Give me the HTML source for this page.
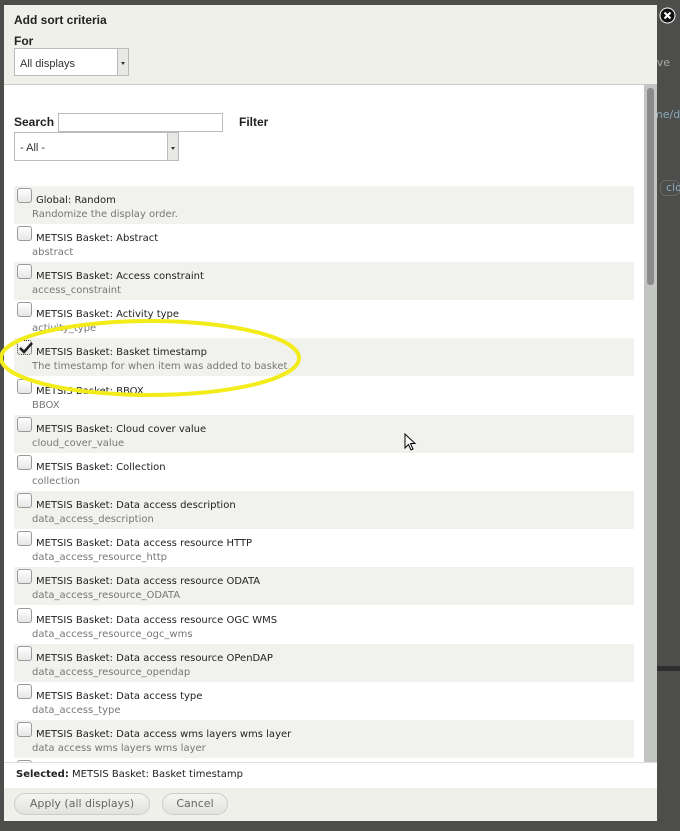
<!DOCTYPE html>
<html><head><style>
*{margin:0;padding:0;box-sizing:border-box}
body{width:680px;height:831px;background:#4d4d4b;position:relative;overflow:hidden;font-family:"DejaVu Sans","Liberation Sans",sans-serif;}
.abs{position:absolute}
.dlg{left:4px;top:5px;width:653px;height:816px;background:#f0f0eb;}
.hdr{font-family:"Liberation Sans",sans-serif;}
.sel{border:1px solid #bbb;background:#fff;font-family:"Liberation Sans",sans-serif;font-size:11px;color:#333;}
.arr{position:absolute;right:0;top:0;bottom:0;width:11px;background:#e8e8e4;border-left:1px solid #bbb}
.arr:after{content:"";position:absolute;left:3px;top:50%;border:2px solid transparent;border-top:3px solid #333;}
.row{position:absolute;left:14px;width:620px;height:38px;}
.row.g{background:#f1f1ed}
.cb{position:absolute;left:3px;top:2px;width:15px;height:15px;border:1px solid #999;border-radius:3px;background:linear-gradient(#fff,#e6e6e6);}
.t{position:absolute;left:22px;top:9px;font-size:10px;color:#222;white-space:nowrap}
.d{position:absolute;left:18px;top:23px;font-size:10px;color:#777;white-space:nowrap}
.btn{position:absolute;top:793px;height:22px;border:1px solid #ccc;border-radius:11px;background:linear-gradient(#f4f4f1,#e2e2de);font-size:11px;color:#666;text-align:center;line-height:20px}
</style></head><body>
<div class="abs" style="left:650px;top:56px;font-size:11px;color:#aaa">ave</div>
<div class="abs" style="left:652px;top:108px;font-size:11px;color:#8ab">me/d</div>
<div class="abs" style="left:660px;top:180px;width:20px;height:16px;border:1px solid #666;border-radius:6px;font-size:11px;color:#8ab;padding-left:5px">clo</div>
<div class="abs" style="left:657px;top:666px;width:23px;height:5px;background:#2e2e2e"></div>
<div class="abs dlg"></div>
<div class="abs hdr" style="left:14px;top:13px;font-size:12px;font-weight:bold;color:#222">Add sort criteria</div>
<div class="abs hdr" style="left:14px;top:34px;font-size:12px;font-weight:bold;color:#222">For</div>
<div class="abs sel" style="left:14px;top:48px;width:115px;height:28px;padding:9px 5px">All displays<div class="arr"></div></div>
<div class="abs" style="left:4px;top:84px;width:640px;height:678px;background:#fff;border-top:1px solid #ccc"></div>
<div class="abs" style="left:644px;top:84px;width:13px;height:678px;background:#c3c5c3"></div>
<div class="abs" style="left:647px;top:88px;width:7px;height:197px;background:#8a8a8a;border-radius:3px"></div>
<div class="abs hdr" style="left:14px;top:115px;font-size:12px;font-weight:bold;color:#222">Search</div>
<div class="abs" style="left:58px;top:113px;width:165px;height:19px;border:1px solid #bbb;background:#fff"></div>
<div class="abs hdr" style="left:239px;top:115px;font-size:12px;font-weight:bold;color:#222">Filter</div>
<div class="abs sel" style="left:14px;top:132px;width:165px;height:29px;padding:9px 5px">- All -<div class="arr"></div></div>

<div class="row g" style="top:186px"><div class="cb"></div><div class="t">Global: Random</div><div class="d">Randomize the display order.</div></div>
<div class="row" style="top:224px"><div class="cb"></div><div class="t">METSIS Basket: Abstract</div><div class="d">abstract</div></div>
<div class="row g" style="top:262px"><div class="cb"></div><div class="t">METSIS Basket: Access constraint</div><div class="d">access_constraint</div></div>
<div class="row" style="top:300px"><div class="cb"></div><div class="t">METSIS Basket: Activity type</div><div class="d">activity_type</div></div>
<div class="row g" style="top:338px"><div class="cb" style="border:1px dotted #333"><svg width="15" height="13" style="position:absolute;left:0;top:0"><path d="M2 7 L6 11 L14 2" stroke="#222" stroke-width="2.6" fill="none"/></svg></div><div class="t">METSIS Basket: Basket timestamp</div><div class="d">The timestamp for when item was added to basket</div></div>
<div class="row" style="top:377px"><div class="cb"></div><div class="t">METSIS Basket: BBOX</div><div class="d">BBOX</div></div>
<div class="row g" style="top:415px"><div class="cb"></div><div class="t">METSIS Basket: Cloud cover value</div><div class="d">cloud_cover_value</div></div>
<div class="row" style="top:453px"><div class="cb"></div><div class="t">METSIS Basket: Collection</div><div class="d">collection</div></div>
<div class="row g" style="top:491px"><div class="cb"></div><div class="t">METSIS Basket: Data access description</div><div class="d">data_access_description</div></div>
<div class="row" style="top:529px"><div class="cb"></div><div class="t">METSIS Basket: Data access resource HTTP</div><div class="d">data_access_resource_http</div></div>
<div class="row g" style="top:567px"><div class="cb"></div><div class="t">METSIS Basket: Data access resource ODATA</div><div class="d">data_access_resource_ODATA</div></div>
<div class="row" style="top:606px"><div class="cb"></div><div class="t">METSIS Basket: Data access resource OGC WMS</div><div class="d">data_access_resource_ogc_wms</div></div>
<div class="row g" style="top:644px"><div class="cb"></div><div class="t">METSIS Basket: Data access resource OPenDAP</div><div class="d">data_access_resource_opendap</div></div>
<div class="row" style="top:682px"><div class="cb"></div><div class="t">METSIS Basket: Data access type</div><div class="d">data_access_type</div></div>
<div class="row g" style="top:720px"><div class="cb"></div><div class="t">METSIS Basket: Data access wms layers wms layer</div><div class="d">data access wms layers wms layer</div></div>
<div class="row" style="top:758px;height:4px;overflow:hidden"><div class="cb"></div></div>

<svg class="abs" style="left:0;top:315px" width="310" height="90"><ellipse cx="150" cy="43" rx="149" ry="37" fill="none" stroke="#f2ec1a" stroke-width="4"/></svg>
<svg class="abs" style="left:404px;top:433px" width="14" height="20"><path d="M1 1 L1 15 L4.5 11.5 L7 17 L9 16 L6.5 10.5 L11 10.5 Z" fill="#fff" stroke="#000" stroke-width="1"/></svg>

<div class="abs" style="left:4px;top:762px;width:653px;height:26px;background:#fff;border-top:1px solid #ddd"></div>
<div class="abs" style="left:16px;top:769px;font-size:10px;color:#222"><b>Selected:</b> METSIS Basket: Basket timestamp</div>
<div class="btn" style="left:14px;width:136px">Apply (all displays)</div>
<div class="btn" style="left:162px;width:66px">Cancel</div>
<svg class="abs" style="left:659px;top:7px" width="17" height="17"><circle cx="8.5" cy="8.5" r="7.5" fill="#111" stroke="#fff" stroke-width="1"/><path d="M5.5 5.5 L11.5 11.5 M11.5 5.5 L5.5 11.5" stroke="#fff" stroke-width="2"/></svg>
</body></html>
